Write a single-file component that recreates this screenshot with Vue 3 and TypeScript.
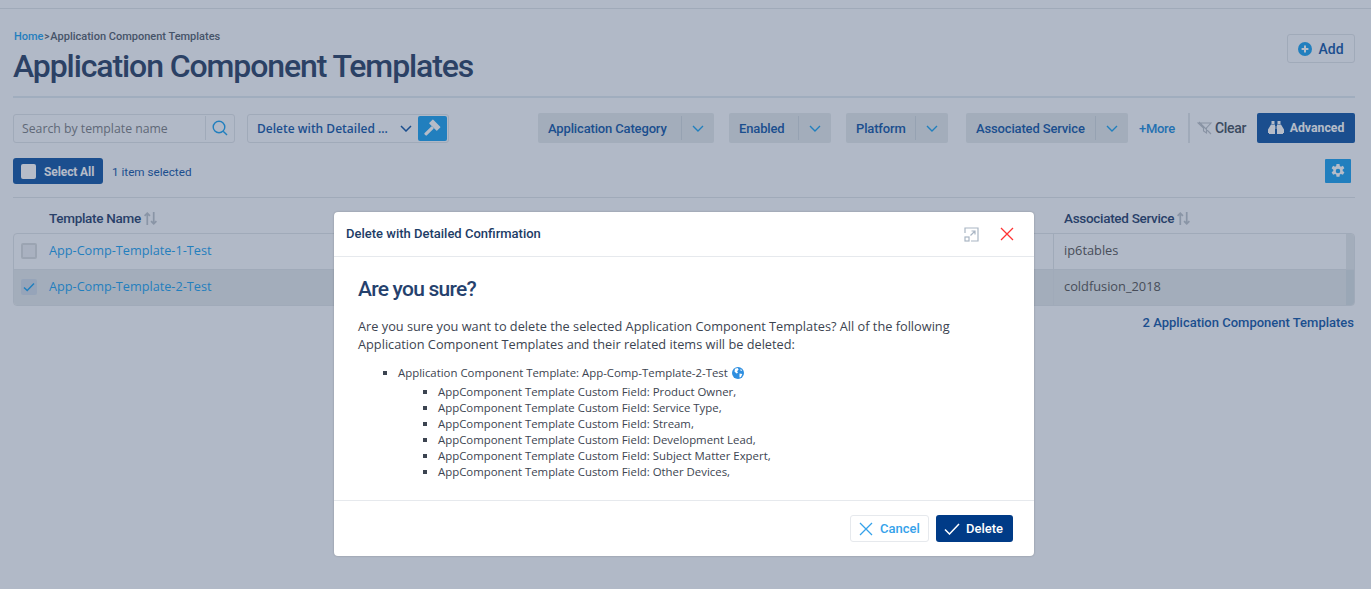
<script setup lang="ts">
const filters: { label: string; width: number }[] = [
  { label: 'Application Category', width: 176 },
  { label: 'Enabled', width: 102 },
  { label: 'Platform', width: 102 },
  { label: 'Associated Service', width: 162 },
]
const rows = [
  { name: 'App-Comp-Template-1-Test', service: 'ip6tables', selected: false },
  { name: 'App-Comp-Template-2-Test', service: 'coldfusion_2018', selected: true },
]
const fields = ['Product Owner', 'Service Type', 'Stream', 'Development Lead', 'Subject Matter Expert', 'Other Devices']
</script>

<template>
  <div class="page">
    <div class="topbar"></div>
    <header class="head">
      <div>
        <div class="crumb"><a>Home</a><span class="gt">&gt;</span><span>Application Component Templates</span></div>
        <h1>Application Component Templates</h1>
      </div>
      <button class="add">
        <svg width="14" height="14" viewBox="0 0 14 14"><circle cx="7" cy="7" r="7" fill="#1ba2f0"/><path d="M7 3.600v6.800M3.600 7h6.800" stroke="#fff" stroke-width="2"/></svg>
        Add
      </button>
    </header>

    <div class="toolbar">
      <div class="search">
        <span class="ph">Search by template name</span>
        <span class="search-ico">
          <svg width="16" height="16" viewBox="0 0 16 16" fill="none" stroke="#1ba2f0" stroke-width="1.400"><circle cx="7" cy="7" r="5.800"/><path d="M11.200 11.200 15 15"/></svg>
        </span>
      </div>
      <div class="action">
        <span class="action-label">Delete with Detailed ...</span>
        <svg class="chev" width="12" height="7" viewBox="0 0 12 7" fill="none" stroke="#1157a7" stroke-width="1.500"><path d="M1 1l5 5 5-5"/></svg>
        <span class="hammer">
          <svg width="18" height="18" viewBox="0 0 18 18" fill="#fff"><g transform="rotate(45 11 6)"><rect x="5.500" y="3.500" width="11" height="5.500" rx=".6"/><rect x="9.400" y="9" width="3.200" height="11" rx="1"/></g></svg>
        </span>
      </div>
      <div class="filters">
        <div v-for="f in filters" :key="f.label" class="filter" :style="{ width: f.width + 'px' }">
          <span class="filter-label">{{ f.label }}</span>
          <span class="filter-chev">
            <svg width="12" height="7" viewBox="0 0 12 7" fill="none" stroke="#1ba2f0" stroke-width="1.400"><path d="M1 1l5 5 5-5"/></svg>
          </span>
        </div>
      </div>
      <a class="more">+More</a>
      <span class="vsep"></span>
      <span class="clear">
        <svg width="16" height="14" viewBox="0 0 16 14" fill="none" stroke="#b9c0c8" stroke-width="1.100"><path d="M1 2h13L9.500 7v5L6.500 10V7zM2 1l12 12"/></svg>
        Clear
      </span>
      <button class="advanced">
        <svg width="16" height="14" viewBox="0 0 16 14" fill="#fff"><path d="M3.500 0h3v3h-3zM9.500 0h3v3h-3zM3 3.600h4V13H1v-1H0V8.500zM9 3.600h4l3 4.900V12h-1v1H9zM7.600 5h.8v3h-.8z"/></svg>
        Advanced
      </button>
    </div>

    <div class="selbar">
      <button class="selall"><span class="box"></span>Select All</button>
      <span class="count">1 item selected</span>
      <button class="gear">
        <svg width="16" height="16" viewBox="0 0 14 14" fill="#fff"><path fill-rule="evenodd" d="M5.700 0h2.600l.3 1.900 1 .5 1.700-.9 1.300 2.200-1.500 1.200v1.200l1.500 1.200-1.300 2.200-1.700-.7-1 .5-.3 1.900H5.700l-.3-1.900-1-.5-1.700.7-1.300-2.200 1.500-1.200V5.100L1.400 3.700l1.300-2.200 1.700.9 1-.5zM7 4.200a2 2 0 1 0 0 4 2 2 0 0 0 0-4z" transform="translate(0 .8)"/></svg>
      </button>
    </div>

    <section class="tablewrap">
      <div class="thead">
        <span class="th first">Template Name <i class="sort"><svg width="15" height="15" viewBox="0 0 14 14" fill="none" stroke="#bbc3cb" stroke-width="1.600"><path d="M4 13V2M1.500 4.500 4 2l2.500 2.500M10 1v11M7.500 9.500 10 12l2.500-2.500"/></svg></i></span>
        <span class="th last">Associated Service <i class="sort"><svg width="15" height="15" viewBox="0 0 14 14" fill="none" stroke="#bbc3cb" stroke-width="1.600"><path d="M4 13V2M1.500 4.500 4 2l2.500 2.500M10 1v11M7.500 9.500 10 12l2.500-2.500"/></svg></i></span>
      </div>
      <div class="tbody">
        <div v-for="r in rows" :key="r.name" class="row" :class="{ sel: r.selected }">
          <span class="cb" :class="{ on: r.selected }">
            <svg v-if="r.selected" width="12" height="10" viewBox="0 0 12 10" fill="none" stroke="#1ba2f0" stroke-width="1.500"><path d="M1 5.500 4.200 8.500 11 1.500"/></svg>
          </span>
          <a class="name">{{ r.name }}</a>
          <span class="svc">{{ r.service }}</span>
          <span class="scroll"></span>
        </div>
      </div>
      <div class="total">2 Application Component Templates</div>
    </section>

    <div class="overlay">
      <div class="modal">
        <div class="m-head">
          <span class="m-title">Delete with Detailed Confirmation</span>
          <svg class="m-exp" width="15" height="15" viewBox="0 0 15 15" fill="none" stroke="#aab6c4" stroke-width="1.200"><path d="M1 6V1h13v13H7"/><rect x="1" y="10" width="4" height="4"/><path d="M6.500 8.500 11 4M7.500 4H11v3.500"/></svg>
          <svg class="m-x" width="14" height="14" viewBox="0 0 14 14" fill="none" stroke="#f33" stroke-width="1.300"><path d="M1 1l12 12M13 1 1 13"/></svg>
        </div>
        <div class="m-body">
          <h2>Are you sure?</h2>
          <p>Are you sure you want to delete the selected Application Component Templates? All of the following Application Component Templates and their related items will be deleted:</p>
          <ul class="l1">
            <li>
              Application Component Template: App-Comp-Template-2-Test
              <svg class="globe" width="12" height="12" viewBox="0 0 12 12"><circle cx="6" cy="6" r="6" fill="#2f8fe0"/><path d="M3 1.800 5.600 1l1 1.500-1.500 1.700.9 1.500-1.500.8L2.500 4.500zM7.500 6.500l2.800.5-1.300 3-1.500.5zM8.500 1.800l1.700 1.700-1.500.4z" fill="#fff"/></svg>
              <ul class="l2">
                <li v-for="f in fields" :key="f">AppComponent Template Custom Field: {{ f }},</li>
              </ul>
            </li>
          </ul>
        </div>
        <div class="m-foot">
          <button class="cancel">
            <svg width="14" height="14" viewBox="0 0 14 14" fill="none" stroke="#35a2ea" stroke-width="1.300"><path d="M1 1l12 12M13 1 1 13"/></svg>
            Cancel
          </button>
          <button class="delete">
            <svg width="16" height="12" viewBox="0 0 16 12" fill="none" stroke="#fff" stroke-width="1.500"><path d="M1 6.500 5.500 11 15 1"/></svg>
            Delete
          </button>
        </div>
      </div>
    </div>
  </div>
</template>

<style>
html, body { margin: 0; background: #fff; }
</style>

<style scoped>
* { box-sizing: border-box; }
.page {
  position: relative;
  height: 589px;
  overflow: hidden;
  background: #f8fafd;
  font-family: "Open Sans", sans-serif;
  color: #555;
}
button { font: inherit; border: 0; background: none; padding: 0; }
.topbar { height: 9px; border-bottom: 1px solid #dee3e8; }
.head {
  display: flex;
  justify-content: space-between;
  align-items: flex-start;
  margin: 0 16px 0 13px;
  padding-top: 21px;
  height: 89px;
  border-bottom: 2px solid #dee9f0;
}
.crumb { display: flex; padding-left: 1px; font: 500 11px/13px Roboto, sans-serif; color: #53606d; }
.crumb a { color: #1ba2f0; letter-spacing: -0.050px; }
.gt { width: 7px; text-align: center; font-size: 10px; }
h1 {
  margin: 3px 0 0;
  font: 500 32px/40px Roboto, sans-serif;
  letter-spacing: -1.100px;
  color: #2a4268;
  white-space: nowrap;
}
.add {
  margin-top: 4px;
  width: 68px;
  height: 29px;
  border: 1px solid #dee3e8;
  border-radius: 3px;
  display: flex;
  align-items: center;
  justify-content: center;
  gap: 6px;
  font: 500 14px Roboto, sans-serif;
  color: #1157a7;
}
.toolbar {
  display: flex;
  align-items: center;
  margin: 15px 16px 0 13px;
  height: 30px;
}
.search {
  width: 222px;
  height: 29px;
  border: 1px solid #dee3e8;
  border-radius: 3px;
  display: flex;
  align-items: center;
  justify-content: space-between;
}
.ph { padding-left: 8px; font-size: 12.250px; color: #7a7f84; white-space: nowrap; }
.search-ico { width: 29px; height: 24px; border-left: 1px solid #dee3e8; display: flex; align-items: center; justify-content: center; }
.action {
  margin-left: 12px;
  width: 202px;
  height: 29px;
  border: 1px solid #dee3e8;
  border-radius: 3px;
  display: flex;
  align-items: center;
  padding: 0 1px 0 9px;
}
.action-label { font-size: 12px; font-weight: 600; color: #1157a7; width: 143px; white-space: nowrap; }
.chev { flex: none; }
.hammer { margin-left: 6px; width: 29px; height: 25px; background: #1ba2f0; border-radius: 2px; display: flex; align-items: center; justify-content: center; }
.filters { margin-left: 89px; display: flex; gap: 15px; }
.filter {
  height: 30px;
  background: #e2e9eb;
  border-radius: 2px;
  display: flex;
  align-items: center;
  justify-content: space-between;
  padding-left: 10px;
}
.filter:nth-child(3) { margin-right: 3px; }
.filter-label { font: 500 13px Roboto, sans-serif; letter-spacing: -0.150px; color: #1157a7; white-space: nowrap; }
.filter-chev { width: 33px; height: 24px; border-left: 1px solid #ced8dd; display: flex; align-items: center; justify-content: center; }
.more { margin-left: 11px; font: 500 13px Roboto, sans-serif; letter-spacing: -0.300px; color: #1b8ddc; width: 37px; white-space: nowrap; }
.vsep { margin-left: 12px; width: 2px; height: 30px; background: #dee3e8; }
.clear { margin-left: 7px; width: 50px; display: flex; align-items: center; gap: 2px; font: 500 14px Roboto, sans-serif; letter-spacing: -0.300px; color: #43505f; white-space: nowrap; }
.advanced {
  margin-left: 10px;
  width: 98px;
  height: 30px;
  background: #1157a7;
  border-radius: 2px;
  display: flex;
  align-items: center;
  justify-content: center;
  gap: 6px;
  font: 700 12.250px Roboto, sans-serif;
  color: #fff;
  white-space: nowrap;
}
.selbar { display: flex; align-items: center; margin: 15px 20px 0 13px; height: 26px; }
.selall {
  width: 90px;
  height: 26px;
  background: #1157a7;
  border-radius: 3px;
  display: flex;
  align-items: center;
  padding: 1px 0 0 8px;
  gap: 8px;
  font: 700 12px Roboto, sans-serif;
  letter-spacing: -0.100px;
  color: #fff;
}
.box { width: 15px; height: 15px; background: #fff; border-radius: 2px; margin-top: -1px; }
.count { margin-left: 9px; padding-top: 1px; font: 400 11.700px Roboto, sans-serif; color: #1157a7; }
.gear { margin-left: auto; width: 26px; height: 24px; background: #1ba2f0; border-radius: 1px; display: flex; align-items: center; justify-content: center; }
.tablewrap { margin: 13px 16px 0 13px; border-top: 1px solid #dee3e8; }
.thead { display: flex; height: 35px; align-items: center; padding-top: 5px; }
.th { font: 500 13.500px Roboto, sans-serif; letter-spacing: -0.300px; color: #25416d; display: flex; align-items: center; gap: 2px; white-space: nowrap; }
.th.first { margin-left: 36px; }
.th.last { margin-left: auto; width: 291px; }
.sort { display: inline-flex; }
.tbody { border: 1px solid #dee3e8; border-radius: 4px; overflow: hidden; }
.row { display: flex; align-items: center; height: 35px; }
.row + .row { border-top: 1px solid #dee3e8; height: 36px; }
.row.sel { background: #e2e9eb; }
.cb { margin-left: 7px; width: 16px; height: 16px; border: 2px solid #d6dbdd; border-radius: 2px; background: #eceff3; display: flex; align-items: center; justify-content: center; flex: none; margin-bottom: 2px; }
.cb.on { background: #cedbe8; border-color: #cedbe8; }
.name { margin-left: 12px; font-size: 12.700px; color: #1ba2f0; padding-bottom: 4px; white-space: nowrap; }
.svc { margin-left: auto; width: 293px; height: 100%; border-left: 1px solid #dee3e8; padding: 0 0 4px 10px; display: flex; align-items: center; font-size: 12.800px; color: #555; }
.scroll { width: 8px; height: 100%; background: #e2e9eb; flex: none; }
.row.sel .scroll { background: #d5dfe4; }
.total { margin: 9px 1px 0 0; text-align: right; font: 500 13px Roboto, sans-serif; color: #1157a7; }

.overlay {
  position: absolute;
  inset: 0;
  background: rgba(45, 64, 98, 0.35);
  padding: 212px 3px 0 0;
  display: flex;
  justify-content: center;
  align-items: flex-start;
}
.modal {
  width: 700px;
  height: 344px;
  background: #fff;
  border-radius: 4px;
  box-shadow: 0 0 2px rgba(0, 0, 0, .25);
  display: flex;
  flex-direction: column;
}
.m-head {
  height: 45px;
  border-bottom: 1px solid #e6e9ed;
  display: flex;
  align-items: center;
  padding: 0 20px 0 12px;
  flex: none;
}
.m-title { font: 500 13px Roboto, sans-serif; color: #1d3c66; padding-bottom: 2px; }
.m-exp { margin-left: auto; }
.m-x { margin-left: 21px; }
.m-body { flex: 1; padding: 19px 24px 0; }
h2 { margin: 0; font: 500 21px/26px Roboto, sans-serif; letter-spacing: -0.750px; color: #25416d; }
p { margin: 15px 0 0; font-size: 12.750px; line-height: 18px; color: #3c4450; }
ul { margin: 0; padding: 0; list-style: square; }
.l1 { margin-top: 12px; padding-left: 40px; font-size: 11.400px; line-height: 16px; color: #3c4450; }
.l2 { padding-left: 40px; margin-top: 3px; }
.globe { vertical-align: -2px; margin-left: 1px; }
.m-foot {
  height: 56px;
  border-top: 1px solid #e6e9ed;
  display: flex;
  justify-content: flex-end;
  align-items: flex-start;
  gap: 7px;
  padding: 14px 21px 0 0;
  flex: none;
}
.cancel, .delete { height: 27px; border-radius: 3px; display: flex; align-items: center; justify-content: center; gap: 7px; font: 500 13px Roboto, sans-serif; }
.cancel { width: 79px; border: 1px solid #e6e9ed; color: #35a2ea; }
.delete { width: 77px; background: #003b87; color: #fff; gap: 6px; padding-right: 2px; }
</style>
